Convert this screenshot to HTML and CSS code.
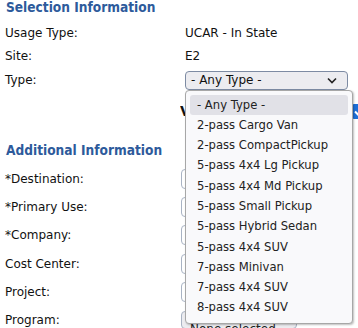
FILE: index.html
```html
<!DOCTYPE html>
<html>
<head>
<meta charset="utf-8">
<link rel="stylesheet" href="styles.css">
</head>
<body>
<div class="page">
  <h2 class="sec sec-first">Selection Information</h2>
  <div class="row r1"><span class="lbl">Usage Type:</span><span class="val">UCAR - In State</span></div>
  <div class="row r2"><span class="lbl">Site:</span><span class="val">E2</span></div>
  <div class="row r3"><span class="lbl">Type:</span>
    <div class="selwrap">
      <div class="select"><span>- Any Type -</span>
        <svg class="chev" width="10" height="7" viewBox="0 0 10 7"><path d="M1 1.5 L5 5.5 L9 1.5" fill="none" stroke="#222" stroke-width="1.6"/></svg>
      </div>
      <ul class="menu">
        <li class="sel">- Any Type -</li>
        <li>2-pass Cargo Van</li>
        <li>2-pass CompactPickup</li>
        <li>5-pass 4x4 Lg Pickup</li>
        <li>5-pass 4x4 Md Pickup</li>
        <li>5-pass Small Pickup</li>
        <li>5-pass Hybrid Sedan</li>
        <li>5-pass 4x4 SUV</li>
        <li>7-pass Minivan</li>
        <li>7-pass 4x4 SUV</li>
        <li>8-pass 4x4 SUV</li>
      </ul>
    </div>
  </div>
  <div class="row r4"><span class="lbl"></span><span class="vopt">Vehicle Options</span><span class="chk"><svg width="15" height="15" viewBox="0 0 15 15"><path d="M3 7.5 L6 10.5 L12 4" fill="none" stroke="#fff" stroke-width="2"/></svg></span></div>
  <h2 class="sec sec-add">Additional Information</h2>
  <div class="frow"><span class="lbl">*Destination:</span><span class="inp"></span></div>
  <div class="frow"><span class="lbl">*Primary Use:</span><span class="inp"></span></div>
  <div class="frow"><span class="lbl">*Company:</span><span class="inp"></span></div>
  <div class="frow"><span class="lbl">Cost Center:</span><span class="inp"></span></div>
  <div class="frow"><span class="lbl">Project:</span><span class="inp"></span></div>
  <div class="frow"><span class="lbl">Program:</span><span class="inp btn">None selected</span></div>
</div>
</body>
</html>
```
FILE: styles.css
```css
html, body { margin: 0; padding: 0; background: #fff; }
body { font-family: "DejaVu Sans", Verdana, sans-serif; font-size: 12px; color: #111; width: 358px; height: 328px; overflow: hidden; }
.page { padding: 0 0 0 5px; position: relative; }
.sec { margin: 0; font-family: "DejaVu Sans Condensed", "DejaVu Sans", sans-serif; font-stretch: condensed; font-size: 13.6px; font-weight: bold; color: #2d5a9b; line-height: 16px; height: 16px; padding-left: 1px; white-space: nowrap; }
.sec-first { margin-top: -1px; margin-bottom: 6px; }
.row { display: flex; align-items: center; height: 23.5px; }
.lbl { width: 180px; flex: none; }
.val { flex: none; }
.r3 { height: 24px; }
.selwrap { position: relative; }
.select { width: 147px; height: 17px; border: 1px solid #7d8ba3; border-radius: 4px; background: #ececf0; display: flex; align-items: center; justify-content: space-between; padding: 0 10px 0 4px; }
.select span { padding-left: 1px; }
.chev { display: block; }
.menu { position: absolute; left: 0; top: 19px; width: 166px; margin: 0; padding: 4px 0 5px 0; list-style: none; background: #f9f9fb; border: 1px solid #a7a7a7; border-radius: 4px; box-shadow: 1px 1px 2px rgba(0,0,0,0.25); z-index: 5; font-size: 11.6px; }
.menu li { height: 20.3px; line-height: 20.3px; margin: 0 4px; padding-left: 7px; color: #222; border-radius: 3px; white-space: nowrap; }
.menu li.sel { background: #e1e1e7; }
.r4 { height: 28px; margin-top: 5px; }
.vopt { font-weight: bold; font-size: 14px; color: #111; margin-left: -5px; flex: none; width: 172px; white-space: nowrap; overflow: hidden; }
.chk { width: 15px; height: 15px; background: #1e6fd8; border-radius: 2px; display: flex; flex: none; }
.sec-add { margin-top: 17px; margin-bottom: 7px; }
.frow { display: flex; align-items: center; height: 28.2px; }
.frow:nth-child(8), .frow:nth-child(9) { }
.frow .lbl { width: 176px; }
.inp { width: 170px; height: 18px; border: 1px solid #a9b3c4; border-radius: 4px; background: #fff; flex: none; }
.btn { width: 106px; height: 16px; background: #ececf0; font-size: 12px; line-height: 34px; padding-left: 8px; overflow: hidden; color: #222; }
```
